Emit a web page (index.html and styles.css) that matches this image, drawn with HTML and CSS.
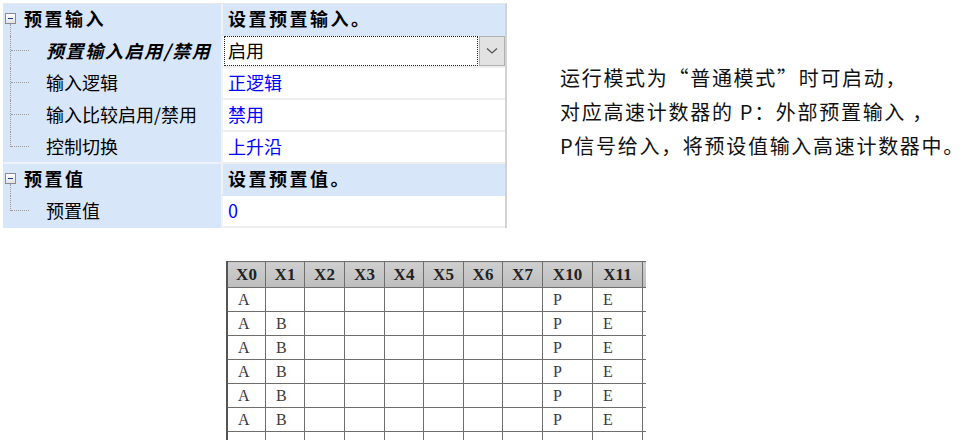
FILE: index.html
```html
<!DOCTYPE html>
<html lang="zh">
<head>
    <meta charset="UTF-8">
    <title>预置输入</title>
    <link rel="stylesheet" href="styles.css">
</head>
<body>

    <div class="top">
        <!-- property grid -->
        <div class="propgrid">
            <div class="row cat">
                <div class="name"><span class="toggle"></span><span class="label">预置输入</span></div>
                <div class="value">设置预置输入。</div>
            </div>
            <div class="row item">
                <div class="name"><span class="branch"></span><span class="label sel">预置输入启用/禁用</span></div>
                <div class="value edit">
                    <span class="combo">启用</span>
                    <span class="drop">
                        <svg width="12" height="8" viewBox="0 0 12 8"><path d="M1 1.5 L6 6 L11 1.5" fill="none" stroke="#555" stroke-width="1.3"/></svg>
                    </span>
                </div>
            </div>
            <div class="row item">
                <div class="name"><span class="branch"></span><span class="label">输入逻辑</span></div>
                <div class="value blue">正逻辑</div>
            </div>
            <div class="row item">
                <div class="name"><span class="branch"></span><span class="label">输入比较启用/禁用</span></div>
                <div class="value blue">禁用</div>
            </div>
            <div class="row item last end">
                <div class="name"><span class="branch"></span><span class="label">控制切换</span></div>
                <div class="value blue">上升沿</div>
            </div>
            <div class="row cat">
                <div class="name"><span class="toggle"></span><span class="label">预置值</span></div>
                <div class="value">设置预置值。</div>
            </div>
            <div class="row item last">
                <div class="name"><span class="branch"></span><span class="label">预置值</span></div>
                <div class="value blue">0</div>
            </div>
        </div>

        <!-- note -->
        <div class="note">
            <p>运行模式为“普通模式”时可启动，</p>
            <p>对应高速计数器的 P：外部预置输入 ，</p>
            <p>P信号给入，将预设值输入高速计数器中。</p>
        </div>
    </div>

    <div class="table-wrap">
        <table class="io">
            <tr>
                <th class="c1">X0</th><th class="c2">X1</th><th class="c3">X2</th><th class="c4">X3</th><th class="c5">X4</th>
                <th class="c6">X5</th><th class="c7">X6</th><th class="c8">X7</th><th class="c9">X10</th><th class="c10">X11</th><th class="stub"></th>
            </tr>
            <tr><td>A</td><td></td><td></td><td></td><td></td><td></td><td></td><td></td><td>P</td><td>E</td><td class="stub"></td></tr>
            <tr><td>A</td><td>B</td><td></td><td></td><td></td><td></td><td></td><td></td><td>P</td><td>E</td><td class="stub"></td></tr>
            <tr><td>A</td><td>B</td><td></td><td></td><td></td><td></td><td></td><td></td><td>P</td><td>E</td><td class="stub"></td></tr>
            <tr><td>A</td><td>B</td><td></td><td></td><td></td><td></td><td></td><td></td><td>P</td><td>E</td><td class="stub"></td></tr>
            <tr><td>A</td><td>B</td><td></td><td></td><td></td><td></td><td></td><td></td><td>P</td><td>E</td><td class="stub"></td></tr>
            <tr><td>A</td><td>B</td><td></td><td></td><td></td><td></td><td></td><td></td><td>P</td><td>E</td><td class="stub"></td></tr>
            <tr><td></td><td></td><td></td><td></td><td></td><td></td><td></td><td></td><td></td><td></td><td class="stub"></td></tr>
        </table>
    </div>

</body>
</html>
```

FILE: styles.css
```css
body, html {
    margin: 0;
    padding: 0;
    height: 100%;
    overflow: hidden;
    background: #fff;
}

.top {
    display: flex;
    align-items: flex-start;
}

/* Property grid */
.propgrid {
    flex: none;
    margin: 3px 0 0 3px;
    width: 502px;
    border-top: 1px solid #e8e8e8;
    border-right: 2px solid #d2d2d2;
    font-family: "Noto Sans CJK SC", sans-serif;
    font-size: 18px;
    color: #000;
}

.row {
    display: flex;
    height: 32px;
}

.row .name {
    width: 218px;
    flex: none;
    display: flex;
    align-items: flex-start;
    background: #d8e6f9;
    position: relative;
}

.row .value {
    flex: 1;
    height: 30px;
    line-height: 28px;
    padding-left: 5px;
    border-left: 2px solid #f2f2f2;
    border-bottom: 2px solid #efefef;
    background: #fff;
    white-space: nowrap;
}

.label {
    line-height: 28px;
    white-space: nowrap;
}

/* category rows */
.cat .value {
    background: #d8e6f9;
    font-weight: bold;
    letter-spacing: 2.5px;
    border-bottom-color: #d8e6f9;
}

.cat .label {
    font-weight: bold;
    letter-spacing: 2.5px;
    margin-left: 8px;
}

.end .name {
    height: 30px;
    border-bottom: 2px solid #eef2f8;
}

.end .value {
    border-bottom-color: #efefef;
}

/* expand box */
.toggle {
    width: 9px;
    height: 9px;
    margin: 9px 0 0 2px;
    border: 1px solid #8a8a8a;
    background: linear-gradient(#ffffff, #e4e4e4);
    position: relative;
    flex: none;
}

.toggle::before {
    content: '';
    position: absolute;
    left: 2px;
    top: 4px;
    width: 5px;
    height: 1px;
    background: #1a3d8f;
}

.toggle::after {
    content: '';
    position: absolute;
    left: 4px;
    top: 10px;
    height: 12px;
    border-left: 1px dotted #9a9a9a;
}

/* tree lines */
.branch {
    width: 22px;
    height: 32px;
    margin-left: 7px;
    margin-right: 14px;
    flex: none;
    position: relative;
    border-left: 1px dotted #9a9a9a;
    box-sizing: border-box;
}

.branch::after {
    content: '';
    position: absolute;
    left: 0;
    top: 14px;
    width: 18px;
    border-top: 1px dotted #9a9a9a;
}

.last .branch {
    height: 15px;
}

.sel {
    font-weight: bold;
    font-style: italic;
    letter-spacing: 1.6px;
}

.blue {
    color: #0000ff;
}

/* dropdown editor */
.value.edit {
    display: flex;
    padding-left: 1px;
}

.combo {
    flex: 1;
    height: 28px;
    line-height: 26px;
    padding-left: 3px;
    border: 1px dotted #222;
}

.drop {
    width: 24px;
    height: 28px;
    margin-left: 1px;
    border: 1px solid #b0b0b0;
    background: #e2e2e2;
    display: flex;
    align-items: center;
    justify-content: center;
}

/* note text */
.note {
    margin: 61px 0 0 53px;
    font-family: "Noto Sans CJK SC", sans-serif;
    font-size: 20px;
    letter-spacing: 1.7px;
    color: #111;
}

.note p {
    margin: 0;
    line-height: 34px;
    white-space: nowrap;
}

/* IO table */
.table-wrap {
    padding: 33px 0 0 226px;
}

.io {
    border-collapse: collapse;
    font-family: "Liberation Serif", serif;
    font-size: 16px;
    color: #3a3a3a;
    border-top: 1px solid #b8b8b8;
}

.io th, .io td {
    border: 1px solid #6e6e6e;
    padding: 0;
}

.io th {
    height: 25px;
    background: linear-gradient(#cfcfcf, #bdbdbd);
    color: #222;
    font-weight: bold;
    font-size: 17px;
    text-align: center;
}

.io td {
    height: 23px;
    padding-left: 10px;
    text-align: left;
}

.io tr > :first-child {
    border-left: 2px solid #555;
}

.c1 { width: 37px; }
.c2 { width: 38px; }
.c3 { width: 39px; }
.c4 { width: 39px; }
.c5 { width: 38px; }
.c6 { width: 39px; }
.c7 { width: 38px; }
.c8 { width: 39px; }
.c9 { width: 49px; }
.c10 { width: 49px; }

.io .stub {
    width: 3px;
    padding: 0;
    border-right: none;
}
```
